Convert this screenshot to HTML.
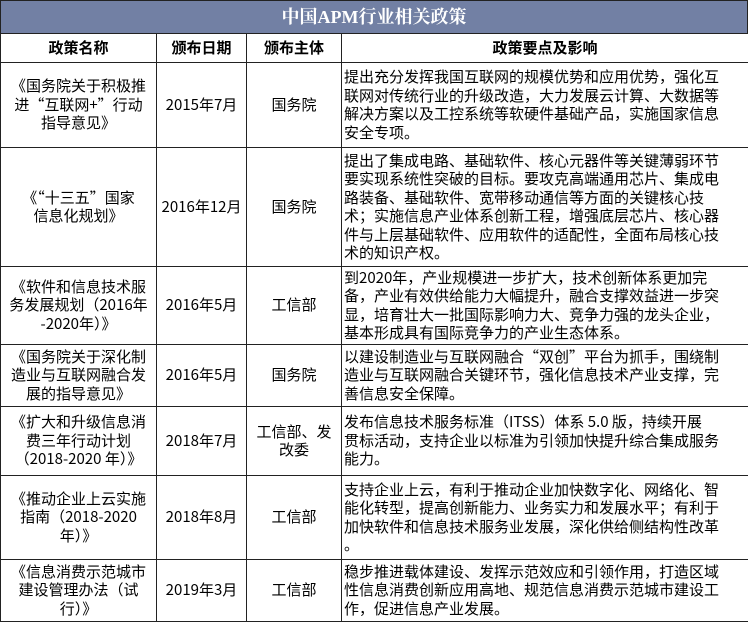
<!DOCTYPE html>
<html><head><meta charset="utf-8"><style>
body{margin:0;width:748px;height:622px;background:#fff;overflow:hidden;font-family:"WenQuanYi Zen Hei","Noto Sans CJK SC",sans-serif;color:#000}
.t{position:absolute;left:0;top:0;width:746px;height:32px;background:#7280a4;border:1px solid #222;color:#fff;font:bold 18px "Liberation Serif","Noto Serif CJK SC",serif;text-align:center;line-height:32px}
table{position:absolute;left:0;top:33px;border-collapse:collapse;width:748px;table-layout:fixed}
td{border:1px solid #222;font-size:15px;line-height:18.5px;padding:0 1px;text-align:center;vertical-align:middle;white-space:nowrap;overflow:hidden}
td.l{text-align:left;padding-left:2px}
tr.h td{font-weight:bold;font-size:15px}
</style></head><body>
<div class="t">中国APM行业相关政策</div>
<table>
<colgroup><col style="width:156px"><col style="width:90px"><col style="width:95px"><col style="width:407px"></colgroup>
<tr class="h" style="height:29px"><td>政策名称</td><td>颁布日期</td><td>颁布主体</td><td>政策要点及影响</td></tr>
<tr style="height:85px"><td>《国务院关于积极推<br>进“互联网+”行动<br>指导意见》</td><td>2015年7月</td><td>国务院</td><td class="l">提出充分发挥我国互联网的规模优势和应用优势，强化互<br>联网对传统行业的升级改造，大力发展云计算、大数据等<br>解决方案以及工控系统等软硬件基础产品，实施国家信息<br>安全专项。</td></tr>
<tr style="height:119px"><td>《“十三五”国家<br>信息化规划》</td><td>2016年12月</td><td>国务院</td><td class="l">提出了集成电路、基础软件、核心元器件等关键薄弱环节<br>要实现系统性突破的目标。要攻克高端通用芯片、集成电<br>路装备、基础软件、宽带移动通信等方面的关键核心技<br>术；实施信息产业体系创新工程，增强底层芯片、核心器<br>件与上层基础软件、应用软件的适配性，全面布局核心技<br>术的知识产权。</td></tr>
<tr style="height:78px"><td>《软件和信息技术服<br>务发展规划（2016年<br>-2020年）》</td><td>2016年5月</td><td>工信部</td><td class="l">到2020年，产业规模进一步扩大，技术创新体系更加完<br>备，产业有效供给能力大幅提升，融合支撑效益进一步突<br>显，培育壮大一批国际影响力大、竞争力强的龙头企业，<br>基本形成具有国际竞争力的产业生态体系。</td></tr>
<tr style="height:62px"><td>《国务院关于深化制<br>造业与互联网融合发<br>展的指导意见》</td><td>2016年5月</td><td>国务院</td><td class="l">以建设制造业与互联网融合“双创”平台为抓手，围绕制<br>造业与互联网融合关键环节，强化信息技术产业支撑，完<br>善信息安全保障。</td></tr>
<tr style="height:69px"><td>《扩大和升级信息消<br>费三年行动计划<br>（2018-2020 年）》</td><td>2018年7月</td><td>工信部、发<br>改委</td><td class="l">发布信息技术服务标准（ITSS）体系 5.0 版，持续开展<br>贯标活动，支持企业以标准为引领加快提升综合集成服务<br>能力。</td></tr>
<tr style="height:84px"><td>《推动企业上云实施<br>指南（2018-2020<br>年）》</td><td>2018年8月</td><td>工信部</td><td class="l">支持企业上云，有利于推动企业加快数字化、网络化、智<br>能化转型，提高创新能力、业务实力和发展水平；有利于<br>加快软件和信息技术服务业发展，深化供给侧结构性改革<br>。</td></tr>
<tr style="height:62px"><td>《信息消费示范城市<br>建设管理办法（试<br>行）》</td><td>2019年3月</td><td>工信部</td><td class="l">稳步推进载体建设、发挥示范效应和引领作用，打造区域<br>性信息消费创新应用高地、规范信息消费示范城市建设工<br>作，促进信息产业发展。</td></tr>
</table>
</body></html>
